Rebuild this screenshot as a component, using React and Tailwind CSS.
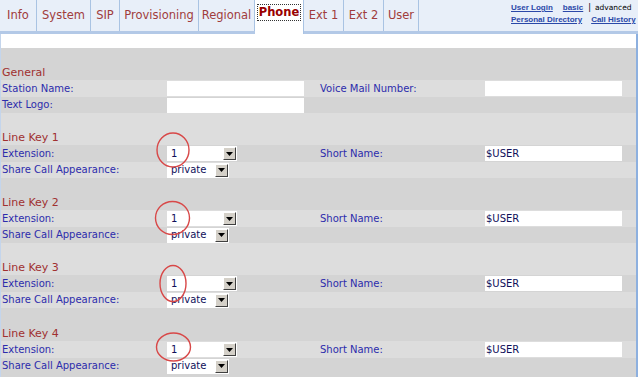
import React from "react";

const LABEL = "text-[10px] leading-none text-[#2c2cac] whitespace-nowrap";

function Select({ value, w }) {
  return (
    <div className={`flex h-[15px] ${w} bg-white items-stretch`}>
      <div className="flex-1 flex items-center pl-[4px] text-[10px] leading-none text-[#10105a]">{value}</div>
      <div className="w-[13px] my-[1px] mr-[1px] bg-[#d4d0c8] border-t border-l border-t-white border-l-white border-b border-r border-b-[#404040] border-r-[#404040] flex items-center justify-center">
        <svg width="7" height="4" viewBox="0 0 7 4"><path d="M0 0H7L3.5 4Z" fill="#000" /></svg>
      </div>
    </div>
  );
}

function Input({ value }) {
  return (
    <div className="h-[15px] w-[137px] bg-white flex items-center pl-[1px] text-[10px] leading-none text-[#10105a]">{value}</div>
  );
}

function Row({ bg, h, c1, c2, c3, c4 }) {
  return (
    <div className={`flex ${bg} ${h}`}>
      <div className="w-[166px] pl-[1px] flex items-center">{c1}</div>
      <div className="w-[153px] flex items-center">{c2}</div>
      <div className="w-[165px] flex items-center">{c3}</div>
      <div className="flex-1 flex items-center">{c4}</div>
    </div>
  );
}

function Header({ bg, text }) {
  return (
    <div className={`flex ${bg} h-[16px] items-center pl-[1px] text-[11px] leading-none text-[#a03030]`}>{text}</div>
  );
}

const groups = [
  { a: "bg-[#dddddd]", b: "bg-[#d4d4d4]", e: "h-[16px]" },
  { a: "bg-[#d4d4d4]", b: "bg-[#dddddd]", e: "h-[16px]" },
  { a: "bg-[#dddddd]", b: "bg-[#d4d4d4]", e: "h-[16px]" },
  { a: "bg-[#d4d4d4]", b: "bg-[#dddddd]", e: "h-[17px]" },
];

const tabs = [
  { t: "Info", w: "w-[37px]" },
  { t: "System", w: "w-[54px]" },
  { t: "SIP", w: "w-[29px]" },
  { t: "Provisioning", w: "w-[79px]" },
  { t: "Regional", w: "w-[56px]" },
];
const tabs2 = [
  { t: "Ext 1", w: "w-[40px]" },
  { t: "Ext 2", w: "w-[40px]" },
  { t: "User", w: "w-[35px]" },
];

function Tab({ t, w }) {
  return (
    <div className={`${w} flex flex-col`}>
      <div className="h-[31px] border-r border-[#a9c3e3] flex items-center justify-center text-[11.5px] leading-none text-[#a03c3c]">{t}</div>
      <div className="h-[3px] bg-[#b3c9e7]" />
    </div>
  );
}

const LINK = "font-['Liberation_Sans',sans-serif] font-bold text-[#2a48a8] underline";

export default function App() {
  return (
    <div className="relative w-[638px] h-[377px] overflow-hidden bg-white flex flex-col font-['DejaVu_Sans',sans-serif]">
      {/* tab bar */}
      <div className="flex h-[34px] bg-[#e8eff9]">
        {tabs.map((x) => <Tab key={x.t} {...x} />)}
        <div className="w-[49px] h-[34px] bg-white border-r border-[#a9c3e3] flex justify-center items-start pt-[4px]">
          <span className="border border-dotted border-[#333] px-[1px] h-[17px] flex items-center text-[11.5px] leading-none font-bold text-[#990000]">Phone</span>
        </div>
        {tabs2.map((x) => <Tab key={x.t} {...x} />)}
        <div className="flex-1 flex flex-col">
          <div className="h-[31px] flex flex-col items-start pl-[92px] pt-[2px] text-[8px] leading-[12px]">
            <div className="flex items-baseline">
              <span className={LINK}>User Login</span>
              <span className={`ml-[10px] ${LINK}`}>basic</span>
              <span className="ml-[5px] text-black">|</span>
              <span className="ml-[4px] text-black text-[7.5px]">advanced</span>
            </div>
            <div className="flex">
              <span className={LINK}>Personal Directory</span>
              <span className={`ml-[9px] ${LINK}`}>Call History</span>
            </div>
          </div>
          <div className="h-[3px] bg-[#b3c9e7]" />
        </div>
      </div>
      {/* white strip */}
      <div className="h-[14px] bg-white border-l border-r-2 border-l-[#c4d5ec] border-r-[#8db0df]" />
      {/* gray content */}
      <div className="flex-1 flex flex-col bg-[#d4d4d4] border-l border-r-2 border-l-[#c4d5ec] border-r-[#8db0df]">
        <div className="h-[16px] bg-[#d4d4d4]" />
        <Header bg="bg-[#d4d4d4]" text="General" />
        <Row bg="bg-[#dddddd]" h="h-[17px]"
          c1={<span className={LABEL}>Station Name:</span>}
          c2={<Input value="" />}
          c3={<span className={LABEL}>Voice Mail Number:</span>}
          c4={<Input value="" />} />
        <Row bg="bg-[#d4d4d4]" h="h-[16px]"
          c1={<span className={LABEL}>Text Logo:</span>}
          c2={<Input value="" />} />
        {groups.map((g, i) => (
          <React.Fragment key={i}>
            <div className={`${g.e} ${g.a}`} />
            <Header bg={g.a} text={`Line Key ${i + 1}`} />
            <Row bg={g.b} h="h-[17px]"
              c1={<span className={LABEL}>Extension:</span>}
              c2={<Select value="1" w="w-[70px]" />}
              c3={<span className={LABEL}>Short Name:</span>}
              c4={<Input value="$USER" />} />
            <Row bg={g.a} h="h-[16px]"
              c1={<span className={LABEL}>Share Call Appearance:</span>}
              c2={<Select value="private" w="w-[62px]" />} />
          </React.Fragment>
        ))}
      </div>
      {/* hand-drawn red circles */}
      <svg className="absolute inset-0 pointer-events-none" width="638" height="377" viewBox="0 0 638 377">
        <g fill="none" stroke="#d84848" strokeWidth="1.4">
          <ellipse cx="173" cy="150" rx="16" ry="17" />
          <ellipse cx="172.5" cy="218" rx="17" ry="16.5" />
          <ellipse cx="173" cy="283.5" rx="13" ry="18" />
          <ellipse cx="173.5" cy="347" rx="17" ry="14" />
        </g>
      </svg>
    </div>
  );
}
